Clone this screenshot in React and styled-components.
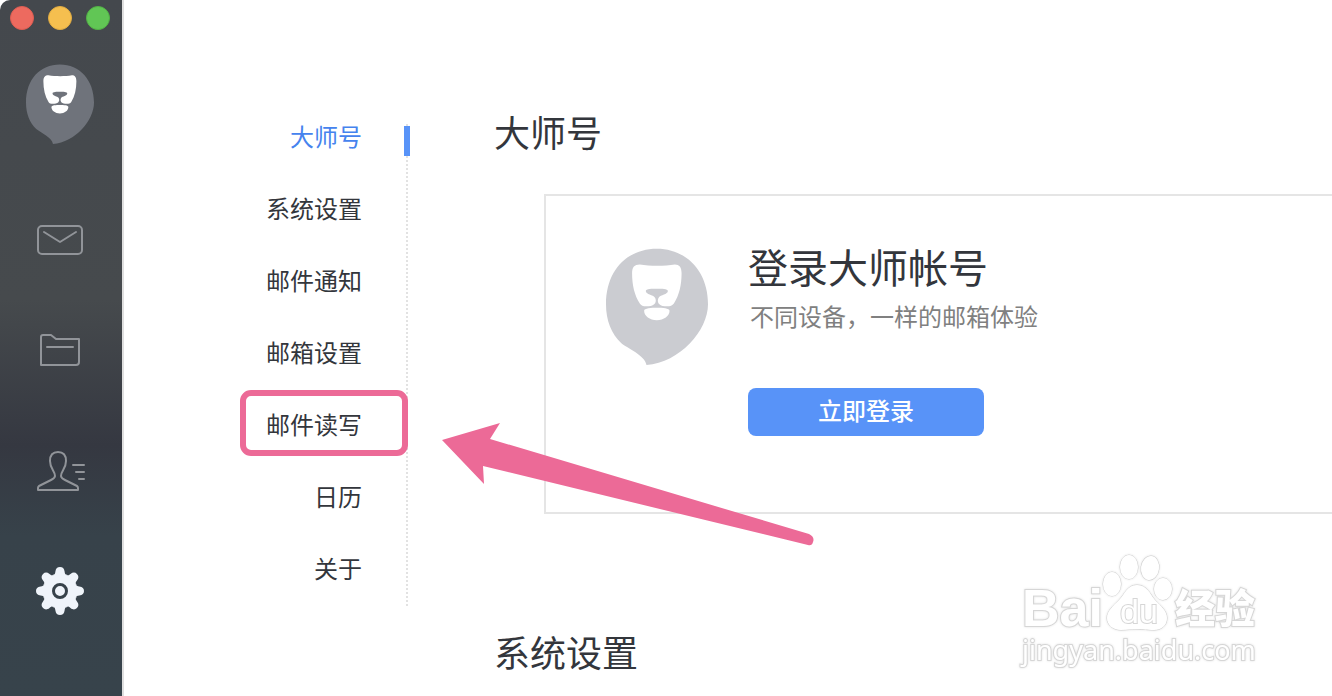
import React from "react";
import styled, { createGlobalStyle, css } from "styled-components";

const GlobalStyle = createGlobalStyle`
  *, *::before, *::after { box-sizing: border-box; }
  body {
    margin: 0;
    background: #fff;
    color: #33363c;
    font-family: "Noto Sans CJK SC", "Noto Sans", sans-serif;
  }
  h1, h2, p, ul { margin: 0; padding: 0; }
  button { font: inherit; border: 0; padding: 0; cursor: pointer; }
`;

const Window = styled.div`
  position: relative;
  display: flex;
  height: 100vh;
  overflow: hidden;
`;

const Sidebar = styled.aside`
  flex: none;
  display: flex;
  flex-direction: column;
  align-items: center;
  width: 124px;
  padding: 6px 2px 0 0;
  border-right: 2px solid #dfdfdf;
  border-top-left-radius: 10px;
  background: linear-gradient(#44484d 0%, #464a4d 43%, #353841 64%, #37424a 77%, #37434b 100%);
`;

const WindowControls = styled.div`
  display: flex;
  gap: 14px;
`;

const ControlDot = styled.button`
  width: 24px;
  height: 24px;
  border-radius: 50%;
  background: ${({ $color }) => $color};
  border: 1px solid ${({ $edge }) => $edge};
`;

const Avatar = styled.button`
  display: flex;
  margin: 34px 0 72px;
  background: none;
`;

const LionSvg = styled.svg`
  display: block;
  flex: none;
  width: ${({ $width }) => $width}px;
  height: ${({ $height }) => $height}px;
`;

const IconGroup = styled.div`
  display: flex;
  flex-direction: column;
  gap: ${({ $gap }) => $gap}px;
`;

const IconButton = styled.button`
  display: flex;
  width: 48px;
  height: 48px;
  background: none;
  color: ${({ $active }) => ($active ? "#eff4fa" : "#919499")};
`;

const IconSvg = styled.svg`
  display: block;
  width: 48px;
  height: 48px;
  overflow: visible;
  fill: none;
  stroke: currentColor;
  stroke-width: 2;
  stroke-linecap: round;
  stroke-linejoin: round;
`;

const Content = styled.div`
  flex: 1;
  display: flex;
  align-items: flex-start;
  min-width: 0;
`;

const SettingsNav = styled.nav`
  flex: none;
  width: 284px;
  margin-top: 124px;
  padding: 0 44px 26px 0;
  border-right: 2px dotted #e2e2e2;
`;

const NavList = styled.ul`
  display: flex;
  flex-direction: column;
  gap: 48px;
  list-style: none;
`;

const NavItem = styled.li`
  position: relative;
  display: flex;
  justify-content: flex-end;
`;

const NavLink = styled.a`
  font-size: 24px;
  line-height: 24px;
  text-decoration: none;
  color: inherit;
  ${({ $active }) =>
    $active &&
    css`
      color: #4583ee;
      &::after {
        content: "";
        position: absolute;
        top: 2px;
        right: -48px;
        width: 6px;
        height: 30px;
        background: #5893f8;
      }
    `}
`;

const Highlight = styled.span`
  position: absolute;
  top: -22px;
  right: -46px;
  width: 168px;
  height: 66px;
  border: 6px solid #ec6a97;
  border-radius: 11px;
  pointer-events: none;
`;

const Arrow = styled.svg`
  position: absolute;
  z-index: 2;
  top: 8px;
  left: 100%;
  width: 460px;
  height: 140px;
  fill: #ec6a97;
  pointer-events: none;
`;

const Main = styled.main`
  flex: 1;
  min-width: 0;
  padding: 104px 0 0 86px;
`;

const SectionTitle = styled.h1`
  font-size: 36px;
  font-weight: 400;
  line-height: 54px;
`;

const Card = styled.section`
  display: flex;
  gap: 40px;
  margin: 36px 0 110px 50px;
  padding: 52px 0 76px 60px;
  border: 2px solid #e5e5e5;
  border-right: 0;
`;

const CardBody = styled.div`
  display: flex;
  flex-direction: column;
  align-items: flex-start;
`;

const CardTitle = styled.h2`
  font-size: 40px;
  font-weight: 400;
  line-height: 36px;
`;

const CardText = styled.p`
  margin: 14px 0 54px;
  padding-left: 2px;
  font-size: 24px;
  line-height: 36px;
  color: #808080;
`;

const PrimaryButton = styled.button`
  width: 236px;
  height: 48px;
  padding-bottom: 4px;
  border-radius: 8px;
  background: #5893f8;
  color: #fff;
  font-size: 24px;
  font-weight: 500;
  line-height: 44px;
`;

const Watermark = styled.div`
  position: absolute;
  right: 70px;
  bottom: 28px;
  width: 240px;
  color: #fff;
  -webkit-text-stroke: 2px #d6d6d6;
  paint-order: stroke fill;
  filter: drop-shadow(0 0 1px #e0e0e0);
  pointer-events: none;
`;

const WatermarkTop = styled.div`
  display: flex;
  align-items: flex-end;
  height: 80px;
`;

const Latin = styled.span`
  font-family: "Liberation Sans", sans-serif;
  font-size: 52px;
  font-weight: 700;
  line-height: 48px;
`;

const Paw = styled.span`
  position: relative;
  flex: none;
  width: 72px;
  height: 80px;
`;

const PawSvg = styled.svg`
  display: block;
  width: 72px;
  height: 80px;
  overflow: visible;
  fill: #fff;
  stroke: #d0d0d0;
`;

const PawText = styled.span`
  position: absolute;
  inset: auto 0 4px;
  text-align: center;
  font-family: "Liberation Sans", sans-serif;
  font-size: 34px;
  line-height: 34px;
`;

const Chinese = styled.span`
  padding-bottom: 6px;
  font-size: 40px;
  font-weight: 900;
  line-height: 40px;
`;

const WatermarkSite = styled.div`
  font-family: "Noto Sans", sans-serif;
  font-size: 27px;
  line-height: 36px;
`;

function Lion({ width, height, color }) {
  return (
    <LionSvg $width={width} $height={height} viewBox="49 57 305 348" preserveAspectRatio="none" aria-hidden="true">
      <path
        fill={color}
        d="M201 59C290 59 354 127 354 224C354 302 270 397 170 405C166 376 112 354 95 340C65 312 49 272 49 224C49 124 112 59 201 59Z"
      />
      <path
        fill="#fff"
        d="M150 106C180 111 225 111 255 106C268 106 275 114 275 132C275 167 268 197 252 222C246 230 238 231 225 230C205 230 200 214 207 204C212 197 234 195 234 185C234 178 215 178 201 178C187 178 168 178 168 185C168 195 190 197 195 204C202 214 197 230 176 230C163 231 155 230 150 222C134 197 127 167 127 132C127 114 134 106 150 106ZM163 244C163 236 185 235 201 235C218 235 239 236 239 244C239 260 222 272 201 272C180 272 163 260 163 244Z"
      />
    </LionSvg>
  );
}

function MailIcon() {
  return (
    <IconSvg viewBox="0 0 48 48" aria-hidden="true">
      <rect x="2" y="10" width="44" height="28" rx="4" />
      <path d="M8 16L24 26L40 16" />
    </IconSvg>
  );
}

function FolderIcon() {
  return (
    <IconSvg viewBox="0 0 48 48" aria-hidden="true">
      <path d="M5 39V11Q5 9 7 9H15L20 13H43V36Q43 39 40 39Z" />
      <path d="M11 21H37" />
    </IconSvg>
  );
}

function ContactsIcon() {
  return (
    <IconSvg viewBox="0 0 48 48" aria-hidden="true">
      <path d="M22 5C16 5 14 9 14 14C14 22 19 24 19 29C19 31 17 32 15 33L3 39Q2 40 2 41V43H42V41Q42 40 41 39L29 33C27 32 25 31 25 29C25 24 30 22 30 14C30 9 28 5 22 5Z" />
      <path d="M37 18H48M40 25H48M43 32H48" />
    </IconSvg>
  );
}

const gearAngles = [0, 45, 90, 135, 180, 225, 270, 315];

function GearIcon() {
  return (
    <IconSvg viewBox="-24 -24 48 48" aria-hidden="true">
      <g fill="currentColor" stroke="none">
        <circle r="17" />
        {gearAngles.map((angle) => (
          <path
            key={angle}
            transform={`rotate(${angle})`}
            d="M-6.8 -16.4C-5.2 -15.8 -4.9 -17.6 -4.6 -19.4C-4.2 -22.6 -2.6 -24 0 -24C2.6 -24 4.2 -22.6 4.6 -19.4C4.9 -17.6 5.2 -15.8 6.8 -16.4L0 0Z"
          />
        ))}
      </g>
      <circle r="6.5" stroke="#37424a" strokeWidth="3" />
    </IconSvg>
  );
}

const controls = [
  { label: "关闭", color: "#ed6a5f", edge: "#df5d52" },
  { label: "最小化", color: "#f5bf4f", edge: "#e1ac42" },
  { label: "缩放", color: "#61c655", edge: "#52b245" },
];

const navItems = [
  { label: "大师号", active: true },
  { label: "系统设置" },
  { label: "邮件通知" },
  { label: "邮箱设置" },
  { label: "邮件读写", highlighted: true },
  { label: "日历" },
  { label: "关于" },
];

export default function App() {
  return (
    <>
      <GlobalStyle />
      <Window>
        <Sidebar>
          <WindowControls>
            {controls.map((c) => (
              <ControlDot key={c.label} aria-label={c.label} $color={c.color} $edge={c.edge} />
            ))}
          </WindowControls>
          <Avatar aria-label="帐号">
            <Lion width={68} height={80} color="#6f737b" />
          </Avatar>
          <IconGroup $gap={73}>
            <IconGroup $gap={62}>
              <IconButton aria-label="邮件"><MailIcon /></IconButton>
              <IconButton aria-label="文件夹"><FolderIcon /></IconButton>
            </IconGroup>
            <IconGroup $gap={72}>
              <IconButton aria-label="联系人"><ContactsIcon /></IconButton>
              <IconButton aria-label="设置" $active><GearIcon /></IconButton>
            </IconGroup>
          </IconGroup>
        </Sidebar>
        <Content>
          <SettingsNav>
            <NavList>
              {navItems.map((item) => (
                <NavItem key={item.label}>
                  <NavLink href="#" $active={item.active}>{item.label}</NavLink>
                  {item.highlighted && (
                    <>
                      <Highlight />
                      <Arrow viewBox="0 0 460 140" aria-hidden="true">
                        <path d="M80 20L138 3L128 19L447 114Q453 117 451 122Q450 126 446 125L121 46L122 64Z" />
                      </Arrow>
                    </>
                  )}
                </NavItem>
              ))}
            </NavList>
          </SettingsNav>
          <Main>
            <SectionTitle>大师号</SectionTitle>
            <Card>
              <Lion width={102} height={117} color="#cbccd1" />
              <CardBody>
                <CardTitle>登录大师帐号</CardTitle>
                <CardText>不同设备，一样的邮箱体验</CardText>
                <PrimaryButton>立即登录</PrimaryButton>
              </CardBody>
            </Card>
            <SectionTitle as="h2">系统设置</SectionTitle>
          </Main>
        </Content>
        <Watermark>
          <WatermarkTop>
            <Latin>Bai</Latin>
            <Paw>
              <PawSvg viewBox="0 0 72 80" aria-hidden="true">
                <ellipse cx="9" cy="32" rx="9" ry="12" />
                <ellipse cx="26" cy="15" rx="9" ry="12" />
                <ellipse cx="47" cy="16" rx="9" ry="12" transform="rotate(8 47 16)" />
                <ellipse cx="60" cy="37" rx="9" ry="11" />
                <path d="M34 33C44 33 47 42 52 48C58 54 64 59 64 66C64 74 58 78 51 78C44 78 40 77 34 77C28 77 24 78 18 78C10 78 4 73 4 66C4 59 10 54 16 48C22 42 24 33 34 33Z" />
              </PawSvg>
              <PawText>du</PawText>
            </Paw>
            <Chinese>经验</Chinese>
          </WatermarkTop>
          <WatermarkSite>jingyan.baidu.com</WatermarkSite>
        </Watermark>
      </Window>
    </>
  );
}
